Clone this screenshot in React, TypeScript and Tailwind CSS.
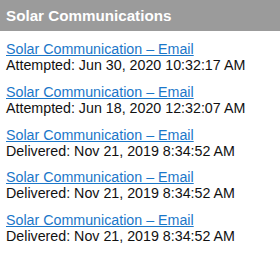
import React from "react";

const rows = [
  "Attempted: Jun 30, 2020 10:32:17 AM",
  "Attempted: Jun 18, 2020 12:32:07 AM",
  "Delivered: Nov 21, 2019 8:34:52 AM",
  "Delivered: Nov 21, 2019 8:34:52 AM",
  "Delivered: Nov 21, 2019 8:34:52 AM",
];

export default function App() {
  return (
    <div className="w-[280px] h-[256px] bg-white overflow-hidden" style={{ fontFamily: '"Liberation Sans", Arial, sans-serif' }}>
      <div className="bg-[#9b9b9b] h-[31px] flex items-center px-[6px]">
        <span className="text-white font-bold text-[15.2px] leading-[17px]">Solar Communications</span>
      </div>
      <div className="flex flex-col px-[6px] pt-[11px] gap-[11px]">
        {rows.map((r, i) => (
          <div key={i} className="flex flex-col text-[14.25px] leading-[15.9px]">
            <a href="#" className="text-[#1b77c9] underline underline-offset-[1px] self-start">Solar Communication – Email</a>
            <span className="text-[#111]">{r}</span>
          </div>
        ))}
      </div>
    </div>
  );
}
